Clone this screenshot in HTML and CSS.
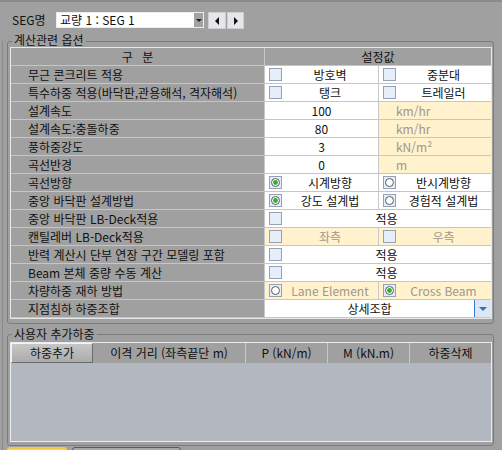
FILE: index.html
```html
<!DOCTYPE html>
<html lang="ko">
<head>
<meta charset="utf-8">
<title>SEG</title>
<link rel="stylesheet" href="styles.css">
</head>
<body>
<div class="app">
  <div class="segbar">
    <span class="seg-label">SEG명</span>
    <div class="combo"><span class="combo-text">교량 1 : SEG 1</span><span class="combo-btn"><i class="tri-down"></i></span></div>
    <div class="nav">
      <span class="navbtn"><i class="tri-left"></i></span>
      <span class="navbtn"><i class="tri-right"></i></span>
    </div>
  </div>
  <div class="frame">
    <div class="group g1">
      <div class="legend">계산관련 옵션</div>
      <div class="opt">
        <div class="c h wide">구 분</div><div class="c h span2">설정값</div>

        <div class="c lab">무근 콘크리트 적용</div>
        <div class="c v chkc"><span class="chk"></span><span class="t">방호벽</span></div>
        <div class="c v chkc last"><span class="chk"></span><span class="t">중분대</span></div>

        <div class="c lab">특수하중 적용(바닥판,관용해석, 격자해석)</div>
        <div class="c v chkc"><span class="chk"></span><span class="t">탱크</span></div>
        <div class="c v chkc last"><span class="chk"></span><span class="t">트레일러</span></div>

        <div class="c lab">설계속도</div>
        <div class="c v num">100</div>
        <div class="c cream unit last">km/hr</div>

        <div class="c lab">설계속도:충돌하중</div>
        <div class="c v num">80</div>
        <div class="c cream unit last">km/hr</div>

        <div class="c lab">풍하중강도</div>
        <div class="c v num">3</div>
        <div class="c cream unit last">kN/m²</div>

        <div class="c lab">곡선반경</div>
        <div class="c v num">0</div>
        <div class="c cream unit last">m</div>

        <div class="c lab">곡선방향</div>
        <div class="c v chkc"><svg class="rad" width="13" height="13" viewBox="0 0 13 13"><rect x="0.5" y="0.5" width="12" height="12" fill="#e6eef9" stroke="#95a2b6"/><circle cx="6.5" cy="6.5" r="4" fill="#fff" stroke="#5a5a5a"/><circle cx="6.5" cy="6.5" r="2.4" fill="#2cb22c"/></svg><span class="t">시계방향</span></div>
        <div class="c v chkc last"><svg class="rad" width="13" height="13" viewBox="0 0 13 13"><rect x="0.5" y="0.5" width="12" height="12" fill="#e6eef9" stroke="#95a2b6"/><circle cx="6.5" cy="6.5" r="4" fill="#fff" stroke="#5a5a5a"/></svg><span class="t">반시계방향</span></div>

        <div class="c lab">중앙 바닥판 설계방법</div>
        <div class="c v chkc"><svg class="rad" width="13" height="13" viewBox="0 0 13 13"><rect x="0.5" y="0.5" width="12" height="12" fill="#e6eef9" stroke="#95a2b6"/><circle cx="6.5" cy="6.5" r="4" fill="#fff" stroke="#5a5a5a"/><circle cx="6.5" cy="6.5" r="2.4" fill="#2cb22c"/></svg><span class="t">강도 설계법</span></div>
        <div class="c v chkc last"><svg class="rad" width="13" height="13" viewBox="0 0 13 13"><rect x="0.5" y="0.5" width="12" height="12" fill="#e6eef9" stroke="#95a2b6"/><circle cx="6.5" cy="6.5" r="4" fill="#fff" stroke="#5a5a5a"/></svg><span class="t">경험적 설계법</span></div>

        <div class="c lab">중앙 바닥판 LB-Deck적용</div>
        <div class="c v chkc span2"><span class="chk"></span><span class="t">적용</span></div>

        <div class="c lab">캔틸레버 LB-Deck적용</div>
        <div class="c cream chkc dim"><span class="chk"></span><span class="t">좌측</span></div>
        <div class="c cream chkc dim last"><span class="chk"></span><span class="t">우측</span></div>

        <div class="c lab">반력 계산시 단부 연장 구간 모델링 포함</div>
        <div class="c v chkc span2"><span class="chk"></span><span class="t">적용</span></div>

        <div class="c lab">Beam 본체 중량 수동 계산</div>
        <div class="c v chkc span2"><span class="chk"></span><span class="t">적용</span></div>

        <div class="c lab">차량하중 재하 방법</div>
        <div class="c cream chkc dim"><svg class="rad" width="13" height="13" viewBox="0 0 13 13"><rect x="0.5" y="0.5" width="12" height="12" fill="#e6eef9" stroke="#95a2b6"/><circle cx="6.5" cy="6.5" r="4" fill="#fff" stroke="#5a5a5a"/></svg><span class="t">Lane Element</span></div>
        <div class="c cream chkc dim last"><svg class="rad" width="13" height="13" viewBox="0 0 13 13"><rect x="0.5" y="0.5" width="12" height="12" fill="#e6eef9" stroke="#95a2b6"/><circle cx="6.5" cy="6.5" r="4" fill="#fff" stroke="#5a5a5a"/><circle cx="6.5" cy="6.5" r="2.4" fill="#2cb22c"/></svg><span class="t">Cross Beam</span></div>

        <div class="c lab">지점침하 하중조합</div>
        <div class="c v sel span2"><span class="t">상세조합</span><span class="sel-btn"><i class="tri-blue"></i></span></div>
      </div>
    </div>

    <div class="group g2">
      <div class="legend">사용자 추가하중</div>
      <div class="loads">
        <div class="loads-head">
          <div class="lh addbtn">하중추가</div>
          <div class="lh">이격 거리 (좌측끝단 m)</div>
          <div class="lh">P (kN/m)</div>
          <div class="lh">M (kN.m)</div>
          <div class="lh lastlh">하중삭제</div>
        </div>
        <div class="loads-body"></div>
      </div>
    </div>

    <div class="tabs">
      <span class="tab tab-on"></span>
      <span class="tab tab-off"></span>
    </div>
  </div>
</div>
</body>
</html>
```
FILE: styles.css
```css
* { box-sizing: border-box; }
html, body { margin: 0; padding: 0; }
body {
  width: 502px;
  height: 450px;
  overflow: hidden;
  background: #a0a0a0;
  font-family: "Noto Sans CJK KR", "Noto Sans", sans-serif;
  font-size: 12px;
  color: #101010;
}
.app {
  height: 450px;
  border-top: 2px solid #8a8a8a;
}

/* top selector bar */
.segbar {
  display: flex;
  align-items: flex-start;
  height: 27px;
  padding: 10px 0 0 12px;
}
.seg-label {
  width: 44px;
  line-height: 16px;
}
.combo {
  width: 148px;
  height: 16px;
  background: #fff;
  border: 1px solid #ececec;
  display: flex;
  align-items: center;
}
.combo-text {
  flex: 1;
  padding-left: 3px;
  line-height: 14px;
}
.combo-btn {
  width: 9px;
  height: 14px;
  background: #a2a2a2;
  display: flex;
  align-items: center;
  justify-content: center;
}
.tri-down {
  display: block;
  border-left: 3px solid transparent;
  border-right: 3px solid transparent;
  border-top: 3px solid #1e1e1e;
}
.nav {
  display: flex;
  gap: 1px;
  margin-left: 4px;
}
.navbtn {
  width: 18px;
  height: 17px;
  background: #e6e6ea;
  border: 1px solid #cdcdd2;
  display: flex;
  align-items: center;
  justify-content: center;
}
.navbtn + .navbtn { width: 17px; }
.tri-left {
  display: block;
  border-top: 4px solid transparent;
  border-bottom: 4px solid transparent;
  border-right: 4px solid #111;
}
.tri-right {
  display: block;
  border-top: 4px solid transparent;
  border-bottom: 4px solid transparent;
  border-left: 4px solid #111;
}

/* frame & groups */
.frame {
  margin-left: 2px;
  border-left: 1px solid #8a8a8a;
}
.group {
  width: 487px;
  margin-left: 4px;
  border: 1px solid #7c7c7c;
  border-radius: 3px;
}
.g1 {
  margin-top: 12px;
  padding: 0 1px 4px 2px;
}
.g2 {
  margin-top: 10px;
  padding: 0 1px 3px 2px;
}
.legend {
  width: max-content;
  margin: -9px 0 0 2px;
  padding: 0 2px;
  line-height: 14px;
  background: #a0a0a0;
}
.g2 .legend {
  margin: -8px 0 1px 2px;
}

/* options grid */
.opt {
  display: grid;
  grid-template-columns: 254px 114px 112px;
  grid-auto-rows: 18px;
  border: 1px solid #e8e8e8;
}
.c {
  display: flex;
  align-items: center;
  border-right: 1px solid #c8c8c8;
  border-bottom: 1px solid #c6c6c6;
  line-height: 14px;
  white-space: nowrap;
  overflow: hidden;
}
.h { justify-content: center; }
.wide { word-spacing: 6px; }
.lab { padding-left: 17px; }
.v { background: #fff; }
.cream { background: #fff2cc; }
.last { border-right: none; }
.span2 { grid-column: span 2; border-right: none; }
.num { justify-content: center; }
.unit {
  padding-left: 17px;
  color: #a0968f;
}
.chkc { padding-left: 4px; }
.chkc .t, .sel .t {
  flex: 1;
  text-align: center;
}
.dim { color: #a0978f; }
.chk {
  display: block;
  flex: none;
  width: 13px;
  height: 13px;
  border: 1px solid #95a2b6;
  background: #e6eef9;
}
.rad {
  display: block;
  flex: none;
}
.sel { padding: 0; }
.sel-btn {
  align-self: stretch;
  width: 17px;
  background: #dde7f3;
  border-left: 1px solid #3a7bd0;
  display: flex;
  align-items: center;
  justify-content: center;
}
.tri-blue {
  display: block;
  border-left: 4px solid transparent;
  border-right: 4px solid transparent;
  border-top: 4px solid #2e6fc4;
}

/* user loads table */
.loads {
  width: 482px;
  border: 1px solid #ececec;
}
.loads-head {
  display: grid;
  grid-template-columns: 82px 153px 82px 82px 81px;
  height: 20px;
}
.lh {
  display: flex;
  align-items: center;
  justify-content: center;
  border-right: 1px solid #c8c8c8;
  line-height: 14px;
  white-space: nowrap;
}
.lastlh { border-right: none; }
.addbtn {
  background: linear-gradient(#c6c6c6, #ababab);
  border-top: 1px solid #f4f4f4;
  border-left: 1px solid #f4f4f4;
  border-right: 1px solid #6c6c6c;
  border-bottom: 1px solid #6c6c6c;
}
.loads-body {
  height: 78px;
  background: #b3b7bf;
}

/* bottom tabs */
.tabs {
  display: flex;
  gap: 5px;
  margin: 1px 0 0 4px;
}
.tab {
  display: block;
  height: 10px;
  border-radius: 3px 3px 0 0;
}
.tab-on {
  width: 60px;
  border-top: 2px solid #f2c640;
  background: #d8d4c4;
}
.tab-off {
  width: 109px;
  border: 1px solid #5a5a5a;
  background: #a8a8a8;
}
```
